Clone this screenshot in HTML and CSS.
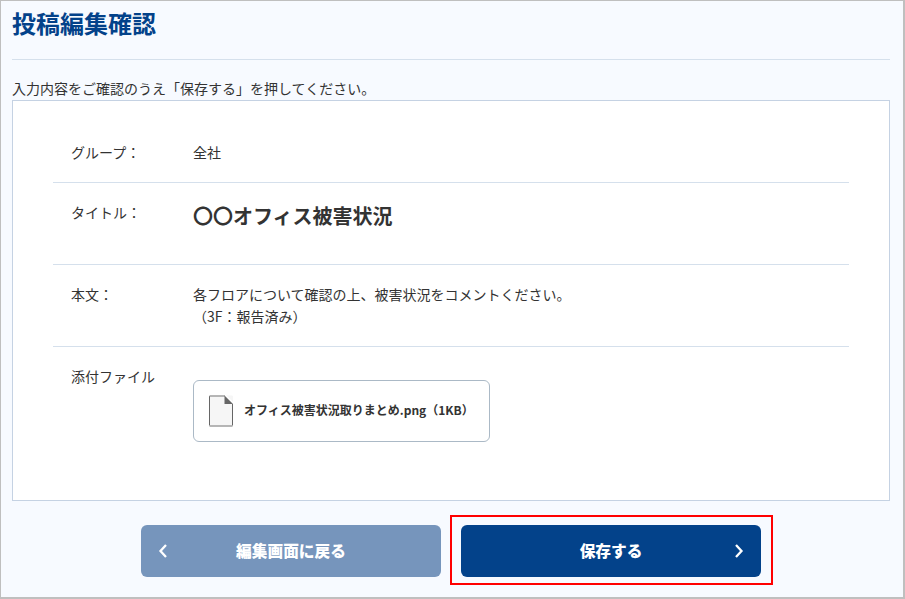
FILE: index.html
```
<!DOCTYPE html>
<html lang="ja">
<head>
    <meta charset="UTF-8">
    <meta name="viewport" content="width=device-width, initial-scale=1.0">
    <title>投稿編集確認</title>
    <link rel="stylesheet" href="styles.css">
</head>
<body>
    <div class="page">
        <h1>投稿編集確認</h1>
        <p class="lead">入力内容をご確認のうえ「保存する」を押してください。</p>
        <div class="panel">
            <dl class="row">
                <dt>グループ：</dt>
                <dd>全社</dd>
            </dl>
            <dl class="row row-title">
                <dt>タイトル：</dt>
                <dd class="title">〇〇オフィス被害状況</dd>
            </dl>
            <dl class="row row-body">
                <dt>本文：</dt>
                <dd>各フロアについて確認の上、被害状況をコメントください。<br>（3F：報告済み）</dd>
            </dl>
            <dl class="row row-file">
                <dt>添付ファイル</dt>
                <dd>
                    <a class="file" href="#">
                        <svg width="26" height="32" viewBox="0 0 26 32">
                            <rect x="1" y="0.500" width="24" height="31" rx="1" fill="#f6f6f6"/>
                            <path d="M1.500 1V30.500M24.500 9V30.500" stroke="#666" fill="none"/>
                            <path d="M1.500 1H17M1.500 31H24.500" stroke="#a0a0a0" stroke-width="1.300" fill="none"/>
                            <path d="M17 0H18L26 8V9H17Z" fill="#fff"/>
                            <path d="M16.500 0.500L25 9H16.500Z" fill="#666"/>
                        </svg>
                        <span>オフィス被害状況取りまとめ.png（1KB）</span>
                    </a>
                </dd>
            </dl>
        </div>
        <div class="buttons">
            <button type="button" class="btn btn-back">
                <svg class="arrow arrow-left" width="10" height="14" viewBox="0 0 10 14"><path d="M8 1L2.500 7L8 13"/></svg>
                編集画面に戻る
            </button>
            <div class="highlight">
                <button type="button" class="btn btn-save">
                    保存する
                    <svg class="arrow arrow-right" width="10" height="14" viewBox="0 0 10 14"><path d="M2 1L7.500 7L2 13"/></svg>
                </button>
            </div>
        </div>
    </div>
</body>
</html>
```

FILE: styles.css
```
* {
    box-sizing: border-box;
}
body {
    margin: 0;
    font-family: "Noto Sans CJK JP", sans-serif;
    font-size: 14px;
    line-height: 22px;
    color: #333;
}
.page {
    height: 599px;
    padding: 0 13px 0 11px;
    border: 1px solid #bfbfbf;
    border-right-width: 2px;
    border-bottom-width: 2px;
    background-color: #f7faff;
    overflow: hidden;
}
h1 {
    height: 59px;
    margin: 0;
    padding-top: 4px;
    border-bottom: 1px solid #d5e0ec;
    font-size: 24px;
    line-height: 36px;
    color: #03428a;
}
.lead {
    margin: 17px 0 1px;
}
.panel {
    height: 401px;
    padding: 21px 40px 0;
    border: 1px solid #c5d2e3;
    background-color: #fff;
}
.row {
    display: flex;
    height: 61px;
    margin: 0;
    padding: 19px 18px 0;
    border-bottom: 1px solid #d5e0ec;
}
.row dt {
    width: 122px;
}
.row dd {
    margin: 0;
}
.row-title,
.row-body {
    height: 82px;
    padding-top: 18px;
}
.row .title {
    font-size: 20px;
    font-weight: bold;
    line-height: 30px;
}
.row-file {
    height: auto;
    padding-top: 18px;
    border-bottom: none;
}
.file {
    display: flex;
    align-items: center;
    width: 297px;
    height: 62px;
    margin-top: 15px;
    padding-left: 14px;
    gap: 10px;
    border: 1px solid #abb9c6;
    border-radius: 6px;
    font-size: 12px;
    font-weight: bold;
    color: #333;
    text-decoration: none;
    white-space: nowrap;
}
.file span {
    padding-bottom: 2px;
}
.buttons {
    display: flex;
    align-items: flex-start;
    margin-top: 14px;
    padding-left: 129px;
    gap: 9px;
}
.btn {
    position: relative;
    display: block;
    width: 300px;
    height: 52px;
    padding: 0 0 2px;
    border: none;
    border-radius: 6px;
    font-family: inherit;
    font-size: 15.700px;
    font-weight: 900;
    color: #fff;
    cursor: pointer;
}
.btn-back {
    margin-top: 10px;
    background-color: #7695bc;
}
.btn-save {
    background-color: #03428a;
}
.highlight {
    width: 323px;
    height: 70px;
    padding: 8px 9px;
    border: 2px solid #f00;
}
.arrow {
    position: absolute;
    top: 19px;
    fill: none;
    stroke: #fff;
    stroke-width: 2.300;
}
.arrow-left {
    left: 17px;
}
.arrow-right {
    right: 17px;
}
```
